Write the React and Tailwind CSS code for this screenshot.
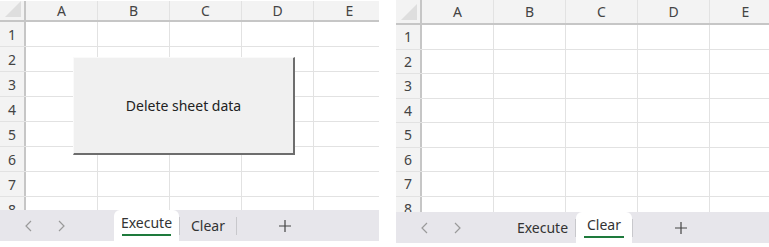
import React from 'react';

const COLS = ['A', 'B', 'C', 'D', 'E'];
const ROWS = [1, 2, 3, 4, 5, 6, 7, 8];

function Corner() {
  return (
    <div className="w-[26px] flex-shrink-0 border-r-2 border-[#c6c6c6] flex items-end justify-end p-[3px]">
      <svg width="16" height="16" viewBox="0 0 16 16">
        <polygon points="16,0 16,16 0,16" fill="#dedede" />
      </svg>
    </div>
  );
}

function Sheet({ headerH, rowH, gridH, active, children }) {
  return (
    <div className="flex flex-col w-full overflow-hidden">
      <div className="flex bg-[#f3f3f3] border-b-2 border-[#c6c6c6]" style={{ height: headerH }}>
        <Corner />
        {COLS.map(c => (
          <div key={c} className="w-[72px] flex-shrink-0 border-r border-[#e2e2e2] flex items-center justify-center text-[14px] text-[#444]">
            {c}
          </div>
        ))}
      </div>
      <div className="relative overflow-hidden" style={{ height: gridH }}>
        {ROWS.map(r => (
          <div key={r} className="flex border-b border-[#e2e2e2]" style={{ height: rowH }}>
            <div className="w-[26px] flex-shrink-0 bg-[#f3f3f3] border-r-2 border-[#c6c6c6] flex items-center justify-center text-[14px] text-[#444]">
              {r}
            </div>
            {COLS.map(c => (
              <div key={c} className="w-[72px] flex-shrink-0 border-r border-[#e2e2e2] bg-white" />
            ))}
          </div>
        ))}
        {children}
      </div>
      <TabBar active={active} />
    </div>
  );
}

function TabBar({ active }) {
  const tab = (name, w) => {
    const on = active === name;
    return (
      <div
        className={`flex flex-col items-center justify-center h-full rounded-t-[6px] ${on ? 'bg-white' : ''}`}
        style={{ width: w }}
      >
        <span className="text-[14px] text-[#333] leading-[16px]">{name}</span>
        {on && <div className="mt-[3px] w-[calc(100%-16px)] h-[2px] bg-[#1e7a3c]" />}
      </div>
    );
  };
  return (
    <div className="h-[31px] bg-[#e7e6eb] flex items-center flex-shrink-0">
      <div className="flex items-center w-[114px] pl-[24px] gap-[22px] text-[#9a9a9a]">
        <svg width="10" height="14" viewBox="0 0 10 14"><path d="M7 2 L2 7 L7 12" fill="none" stroke="currentColor" strokeWidth="1.2" /></svg>
        <svg width="10" height="14" viewBox="0 0 10 14"><path d="M3 2 L8 7 L3 12" fill="none" stroke="currentColor" strokeWidth="1.2" /></svg>
      </div>
      {tab('Execute', 65)}
      <div className="w-px h-[18px] bg-[#c8c8cc]" />
      {tab('Clear', 56)}
      <div className="w-px h-[18px] bg-[#c8c8cc]" />
      <div className="flex-1 max-w-[96px] flex items-center justify-center text-[#444]">
        <svg width="14" height="14" viewBox="0 0 14 14"><path d="M7 1 V13 M1 7 H13" stroke="currentColor" strokeWidth="1.2" /></svg>
      </div>
    </div>
  );
}

export default function App() {
  return (
    <div className="w-[769px] h-[247px] bg-white flex gap-[17px] overflow-hidden" style={{ fontFamily: '"Noto Sans", "Noto Sans CJK JP", sans-serif' }}>
      <div className="w-[379px] flex-shrink-0 pt-[1px]">
        <Sheet headerH={21} rowH={25} gridH={188} active="Execute">
          <button className="absolute left-[73px] top-[35px] w-[222px] h-[98px] bg-[#f0f0f0] border-t border-l border-[#fafafa] border-r-2 border-b-2 border-r-[#6d6d6d] border-b-[#6d6d6d] text-[14px] text-[#222] flex items-center justify-center">
            Delete sheet data
          </button>
        </Sheet>
      </div>
      <div className="w-[373px] flex-shrink-0">
        <Sheet headerH={25} rowH={24.5} gridH={187} active="Clear" />
      </div>
    </div>
  );
}
